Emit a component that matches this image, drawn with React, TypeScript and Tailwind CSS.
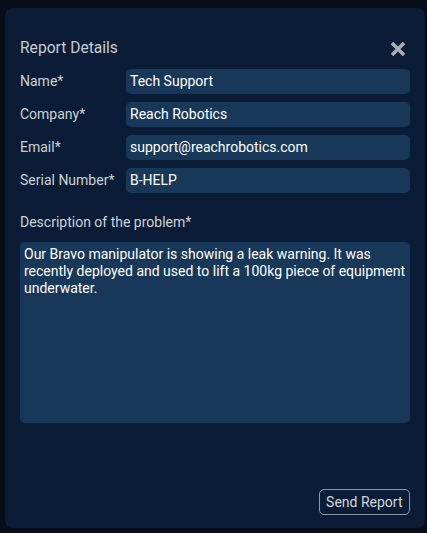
import React from "react"

const fields = [
  { label: "Name*", value: "Tech Support" },
  { label: "Company*", value: "Reach Robotics" },
  { label: "Email*", value: "support@reachrobotics.com" },
  { label: "Serial Number*", value: "B-HELP" },
]

const CloseIcon = () => (
  <svg width="18" height="18" viewBox="0 0 18 18" className="text-[#a9adb3]">
    <path d="M3 3 L15 15 M15 3 L3 15" stroke="currentColor" strokeWidth="3.6" strokeLinecap="butt" />
  </svg>
)

export default function App() {
  return (
    <div className="w-[427px] h-[533px] bg-[#060d18] overflow-hidden font-['Roboto',sans-serif]">
      <div className="ml-[5px] mt-[8px] w-[420px] h-[520px] rounded-[8px] bg-[#0b1d36] px-[15px] pt-[31px] flex flex-col">
        <div className="flex items-center justify-between h-[20px]">
          <span className="text-[15.6px] text-[#c9cdd3]">Report Details</span>
          <span className="mr-[3px]"><CloseIcon /></span>
        </div>
        <div className="mt-[10px] flex flex-col gap-[8px]">
          {fields.map((f) => (
            <div key={f.label} className="flex items-center">
              <span className="w-[106px] text-[14px] text-[#cdd1d6]">{f.label}</span>
              <div className="flex-1 h-[25px] rounded-[5px] bg-[#183859] px-[4px] flex items-center text-[14px] text-white">
                {f.value}
              </div>
            </div>
          ))}
        </div>
        <div className="mt-[19px] text-[14px] text-[#cdd1d6] leading-[20px]">
          Description of the problem*
        </div>
        <div className="mt-[10px] h-[181px] rounded-[5px] bg-[#183859] px-[4px] pt-[4px] text-[14px] leading-[17px] text-white">
          Our Bravo manipulator is showing a leak warning. It was recently deployed and used to lift a 100kg piece of equipment underwater.
        </div>
        <div className="flex-1" />
        <div className="flex justify-end mb-[13px]">
          <button className="h-[26px] px-[6.5px] rounded-[5px] border border-[#8d98a6] text-[14px] text-[#d3d7dc]">
            Send Report
          </button>
        </div>
      </div>
    </div>
  )
}
